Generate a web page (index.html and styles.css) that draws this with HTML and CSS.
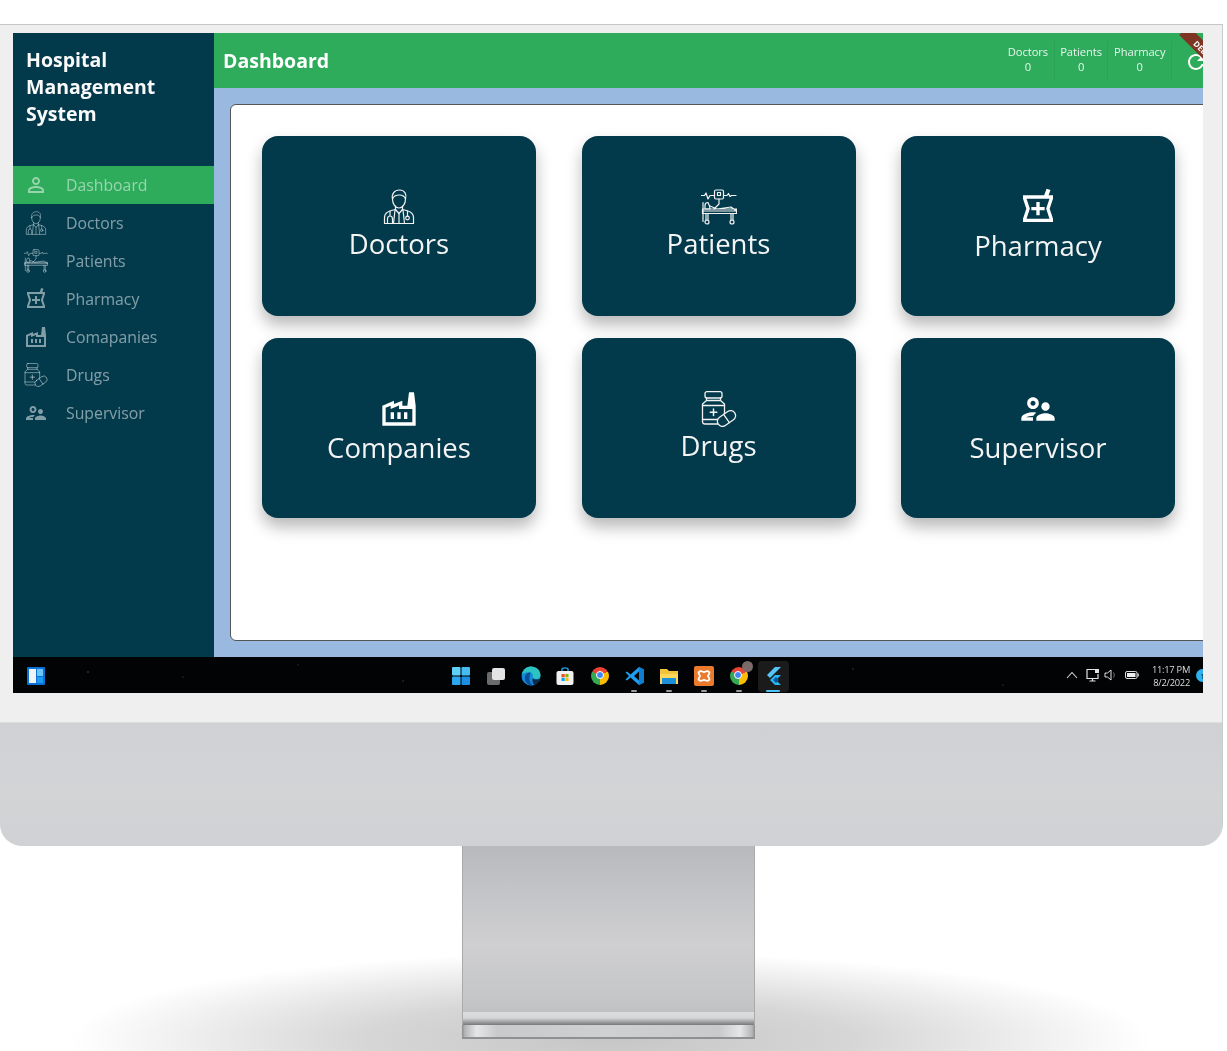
FILE: index.html
```html
<!DOCTYPE html>
<html lang="en">
<head>
    <meta charset="UTF-8">
    <title>Hospital Management System</title>
    <link rel="stylesheet" href="styles.css">
</head>
<body>
<svg class="defs" width="0" height="0">
    <symbol id="i-person" viewBox="0 0 24 24"><path fill="currentColor" d="M12 5.9c1.16 0 2.1.94 2.1 2.1s-.94 2.1-2.1 2.1S9.9 9.16 9.9 8s.94-2.1 2.1-2.1m0 9c2.97 0 6.1 1.46 6.1 2.1v1.1H5.9V17c0-.64 3.13-2.1 6.1-2.1M12 4C9.79 4 8 5.79 8 8s1.79 4 4 4 4-1.79 4-4-1.79-4-4-4zm0 9c-2.67 0-8 1.34-8 4v3h16v-3c0-2.66-5.33-4-8-4z"/></symbol>
    <symbol id="i-doctor" viewBox="0 0 36 36"><g fill="none" stroke="currentColor" stroke-width="1.2" stroke-linejoin="round" stroke-linecap="round">
        <path d="M11.5 10c0 5 3 9 6.5 9s6.5-4 6.5-9"/>
        <path d="M11.5 10c-1.2-5 2-9 7-9s7.5 4 6 9c-1-3-3-4-6-4s-6 1-7 4z"/>
        <path d="M14.5 17v4M21.5 17v4"/>
        <path d="M3.5 34.5v-6c0-4 3-6 7-7l4-1 3.5 4 3.5-4 4 1c4 1 7 3 7 7v6z"/>
        <path d="M14 21l-1.500 13.500M22 21l1.500 13.500M18 24v10.500"/>
        <path d="M9 22v5M6.500 34v-4c0-2 1-3 2.500-3s2.500 1 2.500 3v4"/>
        <circle cx="26.500" cy="29" r="1.800"/><path d="M26.500 27v-5"/>
    </g></symbol>
    <symbol id="i-bed" viewBox="0 0 36 36"><g fill="none" stroke="currentColor" stroke-width="1.2" stroke-linejoin="round" stroke-linecap="round">
        <path d="M.5 6.500h3l1.500-2.500 2 6 2-3.500h4M23 6.500h3l1.500-2 1.500 3 1.500-1h4.500"/>
        <rect x="13.500" y="1" width="9" height="9" rx="1.500"/>
        <rect x="16.500" y="3.500" width="3" height="3"/>
        <path d="M18 10v5l-5 5"/>
        <path d="M2 13.500v19M7 13.500c-2 0-3 1-3 3v3.500h5l-.5-3z"/>
        <path d="M9 17l7 3 14-2 5.500 4H1.500M1.500 20h34v4.500h-34z"/>
        <path d="M5 24.500v7M7 24.500v7M30 24.500v7M32 24.500v7"/>
        <circle cx="6" cy="33" r="2"/><circle cx="31" cy="33" r="2"/>
    </g></symbol>
    <symbol id="i-pharmacy" viewBox="0 0 24 24"><path fill="currentColor" d="M21 5h-2.640l1.140-3.140L17.150 1l-1.460 4H3v2l2 6-2 6v2h18v-2l-2-6 2-6V5zm-3.900 8.630L18.890 19H5.110l1.790-5.370.21-.63-.21-.63L5.110 7h13.780l-1.790 5.370-.21.630.21.630zM13 9h-2v3H8v2h3v3h2v-3h3v-2h-3z"/></symbol>
    <symbol id="i-factory" viewBox="0 0 24 24"><path fill="currentColor" d="M22 22H2V10l7-3v2l5-2v3h3l1-8h3l1 8v12zM12 9.950l-5 2V10l-3 1.320V20h16v-8h-8V9.950zM13 18h-2v-4h2v4zm-4 0H7v-4h2v4zm8 0h-2v-4h2v4z"/></symbol>
    <symbol id="i-drug" viewBox="0 0 36 36"><g fill="none" stroke="currentColor" stroke-width="1.3" stroke-linejoin="round" stroke-linecap="round">
        <rect x="4" y=".7" width="17" height="6.300" rx="2"/>
        <path d="M5.500 7v2.500L1.500 13v17.500c0 1.500 1 2.500 2.500 2.500h17c1.500 0 2.500-1 2.500-2.500V13l-4-3.500V7M5.500 9.500h14"/>
        <path d="M1.500 14.500h22M1.500 28.500h22"/>
        <path d="M12.500 18v6.500M9.200 21.200h6.600" stroke-width="1.500"/>
        <g transform="rotate(-35 25.500 27.500)"><rect x="15.500" y="22.500" width="20" height="10" rx="5" fill="#023a4c"/><path d="M25.500 22.500v10"/></g>
    </g></symbol>
    <symbol id="i-supervisor" viewBox="0 0 24 24"><path fill="currentColor" d="M9 12c1.930 0 3.500-1.570 3.500-3.500S10.930 5 9 5 5.500 6.570 5.500 8.500 7.070 12 9 12zm0-5c.830 0 1.500.670 1.500 1.500S9.830 10 9 10s-1.500-.670-1.500-1.500S8.170 7 9 7zm.050 10H4.770c.990-.500 2.700-1 4.230-1 .110 0 .230.010.340.010.340-.730.930-1.330 1.640-1.810-.730-.130-1.420-.200-1.980-.200-2.340 0-7 1.170-7 3.500V19h7v-1.500c0-.170.020-.340.050-.500zm7.450-2.500c-1.840 0-5.500 1.010-5.500 3V19h11v-1.500c0-1.990-3.660-3-5.500-3zm1.210-1.820c.760-.430 1.290-1.240 1.290-2.180C19 9.120 17.880 8 16.500 8S14 9.120 14 10.500c0 .940.530 1.750 1.290 2.180.360.200.770.320 1.210.320s.850-.120 1.210-.320z"/></symbol>
</svg>

<div class="monitor">
    <div class="bezel">
        <div class="screen">
            <div class="app">
                <aside class="sidebar">
                    <div class="brand">Hospital<br>Management<br>System</div>
                    <a class="nav-item active"><svg class="nav-icon"><use href="#i-person"/></svg>Dashboard</a>
                    <a class="nav-item"><svg class="nav-icon"><use href="#i-doctor"/></svg>Doctors</a>
                    <a class="nav-item"><svg class="nav-icon"><use href="#i-bed"/></svg>Patients</a>
                    <a class="nav-item"><svg class="nav-icon"><use href="#i-pharmacy"/></svg>Pharmacy</a>
                    <a class="nav-item"><svg class="nav-icon"><use href="#i-factory"/></svg>Comapanies</a>
                    <a class="nav-item"><svg class="nav-icon"><use href="#i-drug"/></svg>Drugs</a>
                    <a class="nav-item"><svg class="nav-icon"><use href="#i-supervisor"/></svg>Supervisor</a>
                </aside>
                <main class="main">
                    <header class="topbar">
                        <h1 class="page-title">Dashboard</h1>
                        <div class="stat">Doctors<br>0</div>
                        <div class="stat">Patients<br>0</div>
                        <div class="stat">Pharmacy<br>0</div>
                        <svg class="refresh" viewBox="0 0 24 24"><path fill="currentColor" d="M17.650 6.350C16.200 4.900 14.210 4 12 4c-4.420 0-7.990 3.580-7.990 8s3.570 8 7.990 8c3.730 0 6.840-2.550 7.730-6h-2.080c-.820 2.330-3.040 4-5.650 4-3.310 0-6-2.690-6-6s2.690-6 6-6c1.660 0 3.140.690 4.220 1.780L13 11h7V4l-2.350 2.350z"/></svg>
                        <div class="debug-banner">DEBUG</div>
                    </header>
                    <div class="content">
                        <section class="panel">
                            <div class="card"><svg class="card-icon"><use href="#i-doctor"/></svg>Doctors</div>
                            <div class="card"><svg class="card-icon"><use href="#i-bed"/></svg>Patients</div>
                            <div class="card"><svg class="card-icon big"><use href="#i-pharmacy"/></svg>Pharmacy</div>
                            <div class="card"><svg class="card-icon big"><use href="#i-factory"/></svg>Companies</div>
                            <div class="card"><svg class="card-icon"><use href="#i-drug"/></svg>Drugs</div>
                            <div class="card"><svg class="card-icon big"><use href="#i-supervisor"/></svg>Supervisor</div>
                        </section>
                    </div>
                </main>
            </div>
            <footer class="taskbar">
                <svg class="widgets" viewBox="0 0 18 18">
                    <rect width="18" height="18" rx="1" fill="#0a6fd6"/>
                    <rect x="2" y="2" width="7" height="14" fill="#eef3f7"/>
                    <rect x="10" y="2" width="6" height="7" fill="#6cc5f5"/>
                    <rect x="10" y="10" width="6" height="6" fill="#1c9bf0"/>
                </svg>
                <div class="task-icons">
                    <div class="task-cell"><svg viewBox="0 0 20 20" width="20" height="20">
                        <rect x="1" y="1" width="8.500" height="8.500" rx="1" fill="#5fd0f7"/><rect x="10.500" y="1" width="8.500" height="8.500" rx="1" fill="#45bdf3"/>
                        <rect x="1" y="10.500" width="8.500" height="8.500" rx="1" fill="#2ba7ee"/><rect x="10.500" y="10.500" width="8.500" height="8.500" rx="1" fill="#1b8fe3"/>
                    </svg></div>
                    <div class="task-cell"><svg viewBox="0 0 20 20" width="20" height="20">
                        <rect x="1" y="6" width="13" height="13" rx="2" fill="#6b6b6b"/><rect x="6" y="2" width="13" height="12" rx="2" fill="#e4e4e4"/>
                    </svg></div>
                    <div class="task-cell"><svg viewBox="0 0 20 20" width="20" height="20">
                        <circle cx="10" cy="10" r="9.500" fill="#1487d8"/>
                        <path d="M.6 9C2 3 6 .5 10 .5c5.500 0 9.500 4 9.500 8.500 0 2.500-2 4-4.500 4-2 0-3.500-.7-3.500-1.700 1-1.300.5-4.300-2.500-4.800C6 6 2 7 .6 9z" fill="#2cc4c0"/>
                        <path d="M9.500 6.500c-3.500 0-6 2.500-5.500 6.500s4 7 8.500 6.700c-3.500-1.700-5.500-6-3-13.200z" fill="#0a4f96"/>
                        <path d="M12 12c1 1.500 4 2.500 7.500.5-1 3-3 5.500-6 6.500-2-1.500-2.500-4.500-1.500-7z" fill="#0d2a44"/>
                    </svg></div>
                    <div class="task-cell"><svg viewBox="0 0 20 20" width="20" height="20">
                        <path d="M7 5V3c0-1.500 6-1.500 6 0v2" fill="none" stroke="#1fa5e6" stroke-width="1.400"/>
                        <rect x="1.500" y="5" width="17" height="14" rx="2" fill="#f1f1f1"/>
                        <rect x="6.500" y="8" width="3.200" height="3.200" fill="#f25022"/><rect x="10.300" y="8" width="3.200" height="3.200" fill="#7fba00"/>
                        <rect x="6.500" y="11.800" width="3.200" height="3.200" fill="#00a4ef"/><rect x="10.300" y="11.800" width="3.200" height="3.200" fill="#ffb900"/>
                    </svg></div>
                    <div class="task-cell"><div class="chrome"></div></div>
                    <div class="task-cell open"><svg viewBox="0 0 20 20" width="20" height="20">
                        <path d="M14 1l5 2.500v13L14 19 5.500 11.500 2 14.500 .5 13.500 4 10 .5 6.500 2 5.500l3.500 3z" fill="#1f9cf0"/>
                        <path d="M14 5.500L9 10l5 4.500z" fill="#000"/>
                        <path d="M14 1l5 2.500v13L14 19z" fill="#0f7ed0"/>
                    </svg></div>
                    <div class="task-cell open"><svg viewBox="0 0 20 20" width="20" height="20">
                        <path d="M1 3h7l2 2h9v13H1z" fill="#f3c33c"/>
                        <rect x="1" y="8" width="18" height="10" fill="#fbd75b"/>
                        <rect x="3" y="12" width="14" height="6" fill="#1c8fd8"/>
                    </svg></div>
                    <div class="task-cell open"><svg viewBox="0 0 20 20" width="20" height="20">
                        <rect width="20" height="20" rx="2" fill="#ea7a2c"/>
                        <path d="M5 6c2-2 3 0 5 0s3-2 5 0c1.500 1.500-1 3-1 4s2.500 2.500 1 4c-2 2-3 0-5 0s-3 2-5 0c-1.500-1.500 1-3 1-4S3.500 7.500 5 6z" fill="none" stroke="#fff" stroke-width="1.800"/>
                    </svg></div>
                    <div class="task-cell open"><div class="chrome"><span class="avatar"></span></div></div>
                    <div class="task-cell running"><svg viewBox="0 0 20 20" width="20" height="20">
                        <path d="M11 1h6L6 12 3 9z" fill="#54c5f8"/>
                        <path d="M11 9h6l-5 5 5 5h-6l-5-5z" fill="#29b6f6"/>
                        <path d="M9 14l3-3 3 3-3 3z" fill="#01579b"/>
                    </svg></div>
                </div>
                <div class="tray">
                    <svg class="tray-caret" width="12" height="8" viewBox="0 0 12 8"><path d="M1 7l5-5.500L11 7" fill="none" stroke="#d8d8d8" stroke-width="1.100"/></svg>
                    <svg class="tray-net" width="14" height="14" viewBox="0 0 14 14"><path d="M9 1.500H1v9h11V6M3.500 13h6M6.500 10.500V13" fill="none" stroke="#e2e2e2" stroke-width="1.200"/><rect x="9" y="1" width="4" height="4" fill="#e2e2e2"/></svg>
                    <svg class="tray-sound" width="13" height="12" viewBox="0 0 13 12"><path d="M1 4h2.500L7 1v10L3.500 8H1z" fill="none" stroke="#e2e2e2"/><path d="M9.500 3.500c1 1.500 1 3.500 0 5" fill="none" stroke="#777"/></svg>
                    <svg class="tray-battery" width="14" height="8" viewBox="0 0 14 8"><rect x=".5" y=".5" width="11.500" height="7" rx="1.500" fill="#020304" stroke="#ddd"/><rect x="2" y="2" width="8.500" height="4" fill="#eee"/><rect x="12.500" y="2.500" width="1.300" height="3" fill="#ddd"/></svg>
                    <div class="clock">11:17 PM<br>8/2/2022</div>
                    <div class="badge">1</div>
                </div>
            </footer>
        </div>
    </div>
    <div class="chin"></div>
</div>
<div class="stand"></div>
<div class="foot"></div>
</body>
</html>
```

FILE: styles.css
```css
html,body{margin:0;padding:0;}
body{height:1051px;overflow:hidden;padding-top:24px;box-sizing:border-box;font-family:"Open Sans","Noto Sans",sans-serif;background:radial-gradient(ellipse 540px 88px at 610px 1040px,#c6c6c6 0%,#d6d6d6 45%,rgba(255,255,255,0) 100%) #fff;}
.defs{position:absolute;}

.monitor{width:1223px;box-sizing:border-box;border-top:1px solid #c6c6c6;border-right:1px solid #cbcbcb;border-radius:0 0 22px 22px;overflow:hidden;background:#efefef;}
.bezel{padding:8px 19px 29px 13px;}
.screen{width:1190px;height:660px;overflow:hidden;background:#000;filter:blur(.35px);}
.chin{height:124px;background:linear-gradient(180deg,#d0d1d4,#d3d4d6 60%,#d0d1d4);border-top:1px solid #dedede;box-sizing:border-box;}
.stand{width:293px;height:179px;margin-left:462px;box-sizing:border-box;border-left:1px solid #a9aaac;border-right:1px solid #a9aaac;background:linear-gradient(180deg,#b8b9bc 0%,#c3c4c7 25%,#cfcfd1 55%,#c4c5c7 88%,#bfc0c2 92.500%,#dcdcde 93%,#d6d7d9 96%,#8e8f91 99%,#77787a 100%);}
.foot{width:293px;height:14px;margin-left:462px;box-sizing:border-box;border-bottom:2px solid #8f9092;background:linear-gradient(90deg,#8b8c8e 0%,#b5b6b8 1%,#e6e6e7 5%,#c9cacc 12%,#cfd0d2 50%,#c9cacc 88%,#e6e6e7 95%,#b5b6b8 99%,#8b8c8e 100%);}

.app{display:flex;height:624px;}
.sidebar{width:201px;flex:none;background:#023a4c;}
.brand{height:133px;box-sizing:border-box;padding:13px 0 0 13px;color:#fafafa;font-size:19.500px;font-weight:700;line-height:27px;}
.nav-item{display:flex;align-items:center;gap:18px;height:38px;padding-left:11px;color:rgba(255,255,255,.5);font-size:15.800px;}
.nav-item.active{background:#2eab5b;}
.nav-icon{width:24px;height:24px;flex:none;}

.main{flex:1;min-width:0;display:flex;flex-direction:column;background:#9ab9e0;}
.topbar{position:relative;display:flex;align-items:center;height:55px;flex:none;padding-left:9px;background:#2eab5b;color:#e9f6ee;overflow:hidden;}
.page-title{margin:0 auto 0 0;font-size:19.500px;font-weight:700;color:#fff;}
.stat{padding:3px 5.500px 0;height:40px;box-sizing:border-box;text-align:center;font-size:11.200px;line-height:15px;letter-spacing:-.05px;border-right:1px solid rgba(0,0,0,.05);}
.refresh{width:24px;height:24px;flex:none;margin:3px -5px 0 12px;color:#fff;}
.debug-banner{position:absolute;top:12px;right:-32px;width:60px;height:13px;line-height:13px;transform:rotate(45deg);background:#7f3524;color:#fff;font-size:8px;font-weight:700;text-align:center;}

.content{flex:1;padding:16px 0 16px 16px;}
.panel{height:537px;box-sizing:border-box;margin-right:-8px;padding:31px 0 0 31px;background:#fff;border:1px solid #555;border-radius:6px;display:grid;grid-template-columns:repeat(3,274px);grid-template-rows:180px 180px;column-gap:45.500px;row-gap:22px;align-content:start;}
.card{display:flex;flex-direction:column;align-items:center;justify-content:center;padding-bottom:2px;box-sizing:border-box;background:#023a4c;border-radius:16px;color:#f4f4f4;font-size:27.500px;line-height:37px;box-shadow:0 9px 16px rgba(0,0,0,.28);}
.card-icon{width:36px;height:36px;flex:none;color:#f2f2f2;}
.card-icon.big{width:40px;height:40px;color:#fff;}

.taskbar{display:flex;align-items:center;height:36px;padding-left:14px;background-color:#020304;background-image:radial-gradient(circle at 75px 15px,#555 0,transparent 1.200px),radial-gradient(circle at 170px 20px,#444 0,transparent 1px),radial-gradient(circle at 285px 8px,#444 0,transparent 1px),radial-gradient(circle at 390px 24px,#555 0,transparent 1px),radial-gradient(circle at 840px 12px,#555 0,transparent 1px),radial-gradient(circle at 990px 28px,#444 0,transparent 1px);}
.widgets{width:18px;height:18px;flex:none;margin-top:1px;}
.task-icons{display:flex;margin-left:399px;}
.task-cell{position:relative;width:34.700px;height:36px;padding-top:1px;box-sizing:border-box;display:flex;align-items:center;justify-content:center;}
.task-cell.open::after{content:"";position:absolute;left:14px;bottom:1px;width:6px;height:2px;border-radius:1px;background:#9a9a9a;}
.task-cell.running::before{content:"";position:absolute;left:2px;top:4px;width:31px;height:31px;border-radius:4px;background:#1b1b1b;}
.task-cell.running svg{position:relative;}
.task-cell.running::after{content:"";position:absolute;left:10px;bottom:1px;width:14px;height:2px;border-radius:1px;background:#4fc3f7;}
.chrome{position:relative;width:18px;height:18px;border-radius:50%;background:conic-gradient(#ea4335 0 60deg,#fbbc05 60deg 180deg,#34a853 180deg 300deg,#ea4335 300deg);}
.chrome::before{content:"";position:absolute;left:4.500px;top:4.500px;width:6px;height:6px;border-radius:50%;background:#4285f4;border:1.500px solid #fff;}
.avatar{position:absolute;z-index:1;top:-6px;right:-5px;width:11px;height:11px;border-radius:50%;background:#7a6a68;}
.tray{display:flex;align-items:center;margin-left:auto;margin-right:-6px;color:#ddd;}
.tray svg{flex:none;}
.tray-caret{margin-right:8px;}
.tray-net{margin-right:4px;}
.tray-sound{margin-right:8px;}
.tray-battery{margin-right:5px;}
.clock{margin:2px 6px 0 8px;text-align:right;font-size:9.300px;line-height:13px;letter-spacing:-.25px;}
.badge{width:13px;height:13px;border-radius:50%;background:#2fb0f0;color:#0a2a3a;font-size:8px;line-height:13px;text-align:center;}
```
